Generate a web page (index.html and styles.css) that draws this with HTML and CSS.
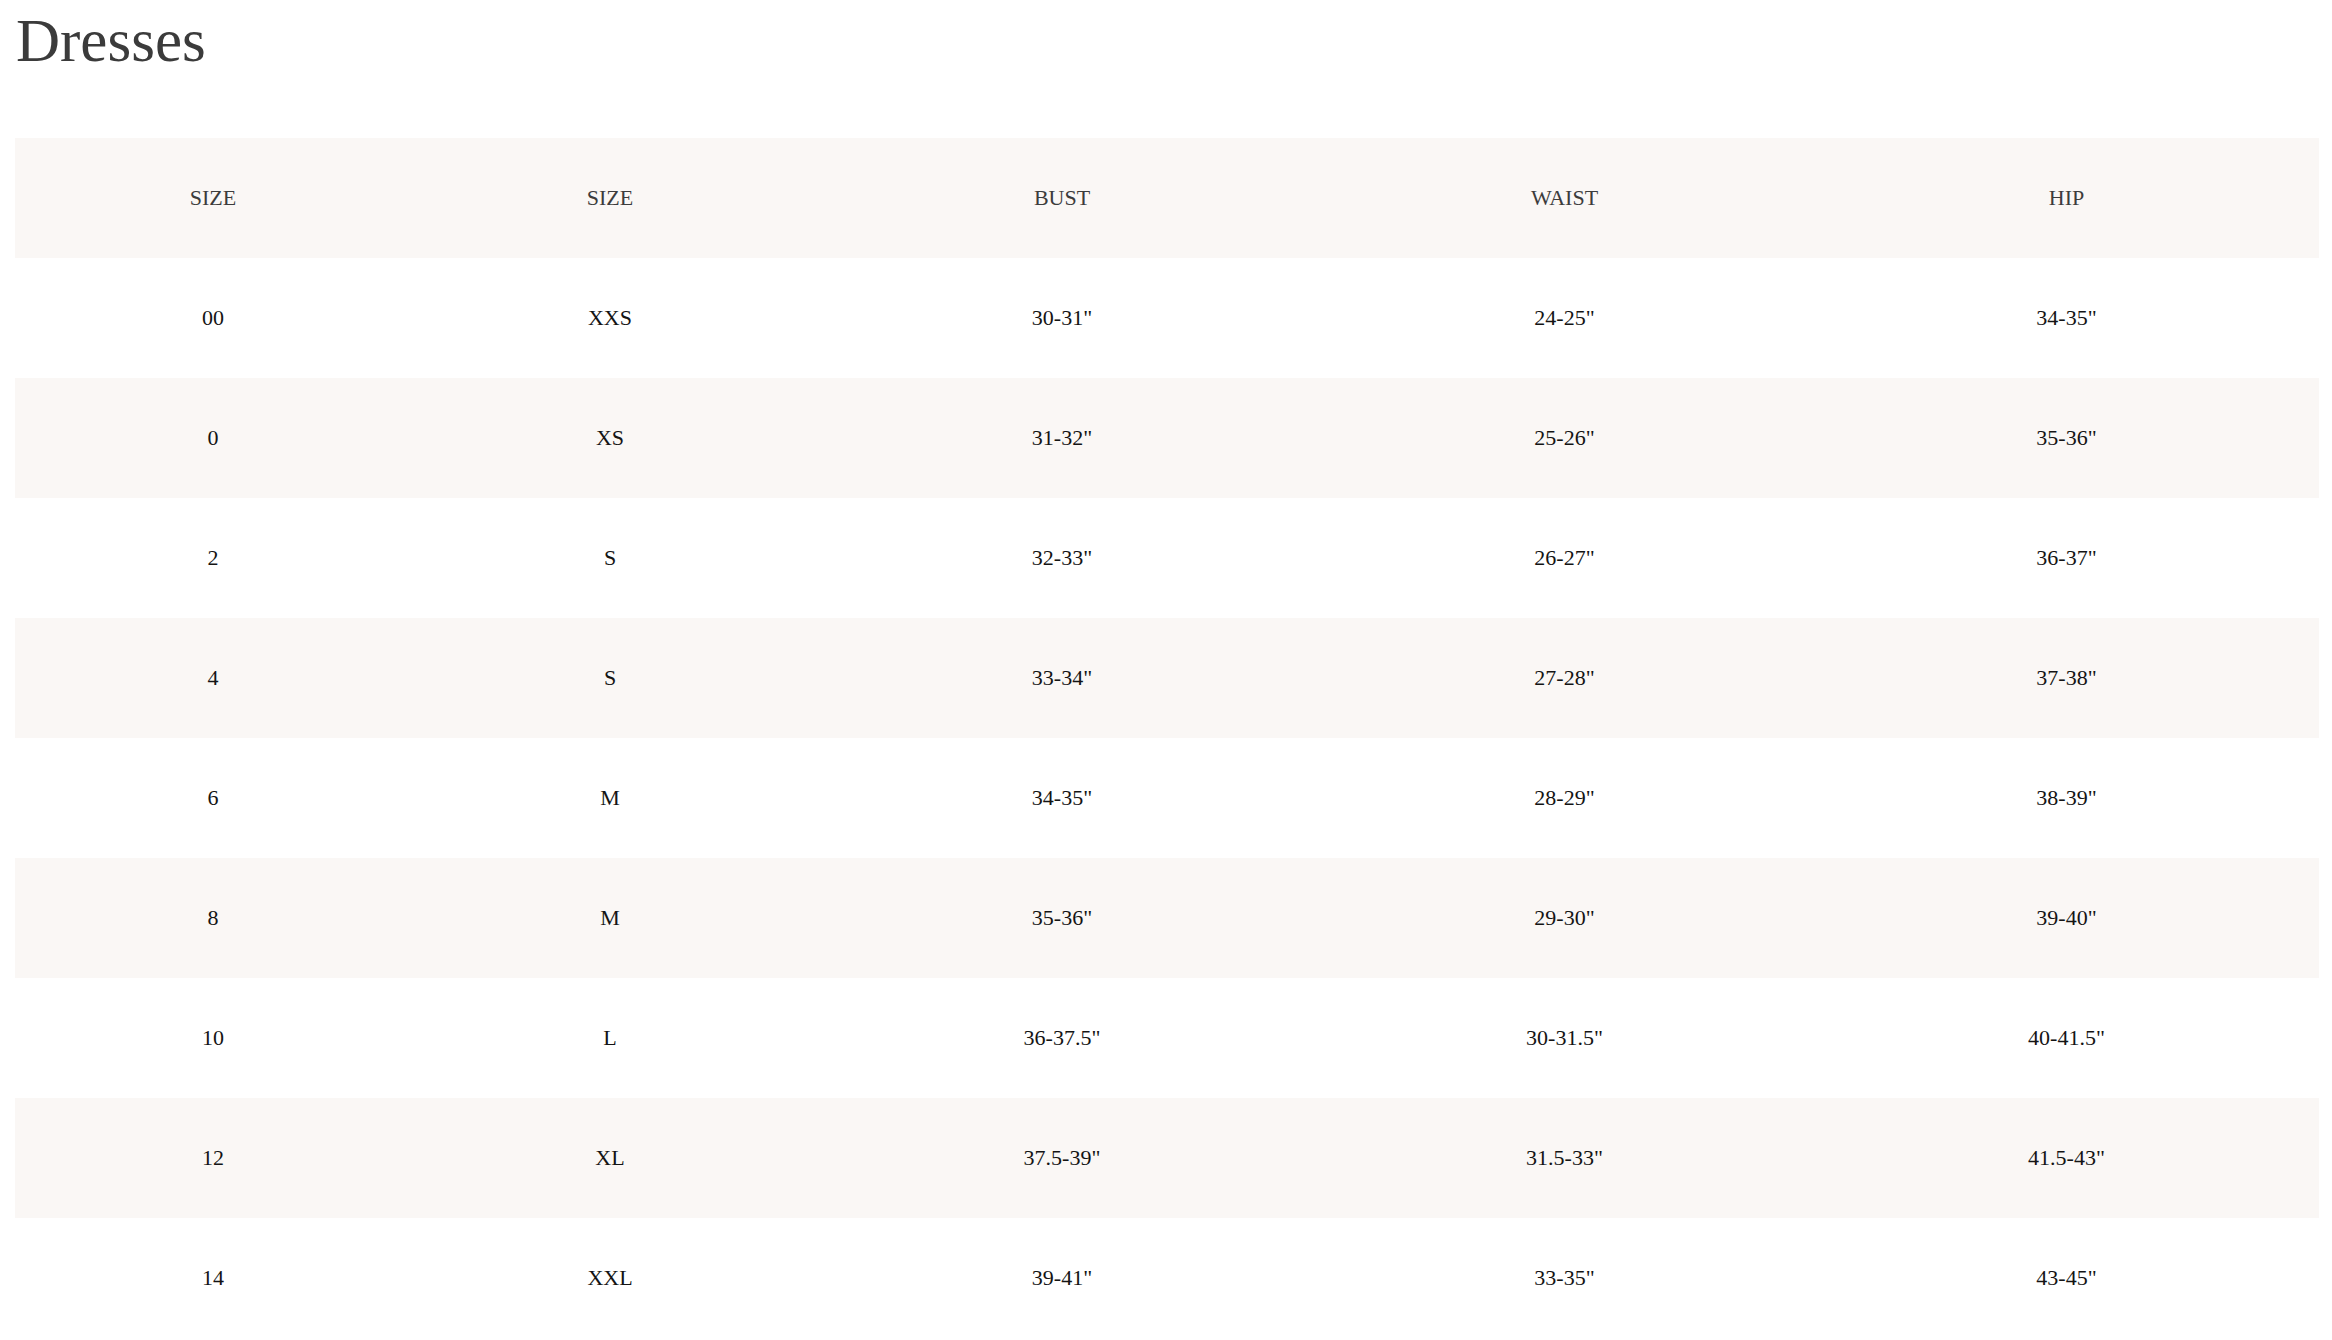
FILE: index.html
```html
<!DOCTYPE html>
<html lang="en">
<head>
<meta charset="utf-8">
<title>Dresses</title>
<link rel="stylesheet" href="styles.css">
</head>
<body>
<main class="page">
  <h1 class="title">Dresses</h1>
  <table class="chart">
    <colgroup>
      <col class="c1"><col class="c2"><col class="c3"><col class="c4"><col class="c5">
    </colgroup>
    <thead>
      <tr class="row shade"><th>SIZE</th><th>SIZE</th><th>BUST</th><th>WAIST</th><th>HIP</th></tr>
    </thead>
    <tbody>
      <tr class="row"><td>00</td><td>XXS</td><td>30-31"</td><td>24-25"</td><td>34-35"</td></tr>
      <tr class="row shade"><td>0</td><td>XS</td><td>31-32"</td><td>25-26"</td><td>35-36"</td></tr>
      <tr class="row"><td>2</td><td>S</td><td>32-33"</td><td>26-27"</td><td>36-37"</td></tr>
      <tr class="row shade"><td>4</td><td>S</td><td>33-34"</td><td>27-28"</td><td>37-38"</td></tr>
      <tr class="row"><td>6</td><td>M</td><td>34-35"</td><td>28-29"</td><td>38-39"</td></tr>
      <tr class="row shade"><td>8</td><td>M</td><td>35-36"</td><td>29-30"</td><td>39-40"</td></tr>
      <tr class="row"><td>10</td><td>L</td><td>36-37.5"</td><td>30-31.5"</td><td>40-41.5"</td></tr>
      <tr class="row shade"><td>12</td><td>XL</td><td>37.5-39"</td><td>31.5-33"</td><td>41.5-43"</td></tr>
      <tr class="row"><td>14</td><td>XXL</td><td>39-41"</td><td>33-35"</td><td>43-45"</td></tr>
    </tbody>
  </table>
</main>
</body>
</html>
```

FILE: styles.css
```css
html, body {
  margin: 0;
  padding: 0;
  background: #ffffff;
}

.page {
  display: flex;
  flex-direction: column;
  padding: 0 13px 0 15px;
  font-family: "Liberation Serif", "DejaVu Serif", serif;
}

.title {
  margin: 6px 0 62px 1px;
  font-size: 61px;
  font-weight: 400;
  line-height: normal;
  color: #3b3b3b;
}

.chart {
  width: 100%;
  table-layout: fixed;
  border-collapse: collapse;
  border-spacing: 0;
}

.c1 { width: 396px; }
.c2 { width: 398px; }
.c3 { width: 506px; }
.c4 { width: 499px; }
.c5 { width: 505px; }

.row th,
.row td {
  height: 120px;
  padding: 0;
  text-align: center;
  vertical-align: middle;
  font-size: 22px;
  line-height: normal;
}

.row th {
  font-weight: 400;
  color: #3c3c3c;
}

.row td {
  color: #141414;
}

.shade {
  background: #faf7f5;
}
```
